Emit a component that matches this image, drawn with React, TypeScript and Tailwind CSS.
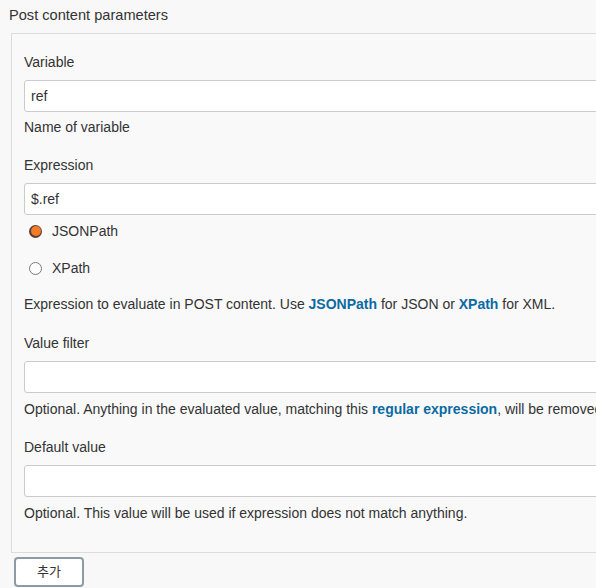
import React from 'react'

const font = { fontFamily: '"Liberation Sans", Arial, sans-serif' }

function Label({ children, className = '' }: { children: React.ReactNode; className?: string }) {
  return <div className={`h-5 leading-5 text-[14px] font-medium text-[#333] ${className}`}>{children}</div>
}

function TextInput({ value = '', className = '' }: { value?: string; className?: string }) {
  return (
    <div className={`h-8 w-[620px] rounded-[3px] border border-[#cbcbcb] bg-white pl-[6px] leading-[30px] text-[14px] text-[#333] ${className}`}>
      {value}
    </div>
  )
}

function Help({ children, className = '' }: { children: React.ReactNode; className?: string }) {
  return <div className={`h-5 leading-5 text-[14px] text-[#333] whitespace-nowrap ${className}`}>{children}</div>
}

function Radio({ checked, label, className = '' }: { checked?: boolean; label: string; className?: string }) {
  return (
    <div className={`flex h-5 items-center pl-[5px] text-[14px] text-[#333] ${className}`}>
      {checked ? (
        <span className="flex h-[13px] w-[13px] items-center justify-center rounded-full bg-[#5a4032]">
          <span className="h-[10px] w-[10px] rounded-full bg-[#f47b2a]" />
        </span>
      ) : (
        <span className="h-[13px] w-[13px] rounded-full border border-[#7a7a7a] bg-white" />
      )}
      <span className="ml-[10px]">{label}</span>
    </div>
  )
}

export default function App() {
  return (
    <div className="h-[588px] w-[596px] overflow-hidden bg-[#f8f8f8]" style={font}>
      <div className="pl-[9px] pt-[5px] h-5 leading-5 text-[14.6px] text-[#333]">Post content parameters</div>

      <div className="ml-[11px] mt-[13px] w-[700px] border-l border-t border-b border-[#dcdcdc] bg-[#f9f9f9] pl-3 pt-[18px] pb-[29px]">
        <Label>Variable</Label>
        <TextInput value="ref" className="mt-2" />
        <Help className="mt-[5px]">Name of variable</Help>

        <Label className="mt-[18px]">Expression</Label>
        <TextInput value="$.ref" className="mt-2" />
        <Radio checked label="JSONPath" className="mt-[6px]" />
        <Radio label="XPath" className="mt-[17px]" />
        <Help className="mt-4">
          Expression to evaluate in POST content. Use{' '}
          <a className="font-bold text-[#0b6aa2]">JSONPath</a> for JSON or{' '}
          <a className="font-bold text-[#0b6aa2]">XPath</a> for XML.
        </Help>

        <Label className="mt-[19px]">Value filter</Label>
        <TextInput className="mt-2" />
        <Help className="mt-[6px]">
          Optional. Anything in the evaluated value, matching this{' '}
          <a className="font-bold text-[#0b6aa2]">regular expression</a>, will be removed.
        </Help>

        <Label className="mt-[18px]">Default value</Label>
        <TextInput className="mt-2" />
        <Help className="mt-[6px]">Optional. This value will be used if expression does not match anything.</Help>
      </div>

      <button className="ml-[14px] mt-[4px] flex h-[30px] w-[70px] items-center justify-center rounded-[4px] border-2 border-[#8c9ba4] bg-white text-[13px] text-[#333]" style={{ fontFamily: '"Liberation Sans", "Noto Sans CJK KR", sans-serif' }}>
        추가
      </button>
    </div>
  )
}
